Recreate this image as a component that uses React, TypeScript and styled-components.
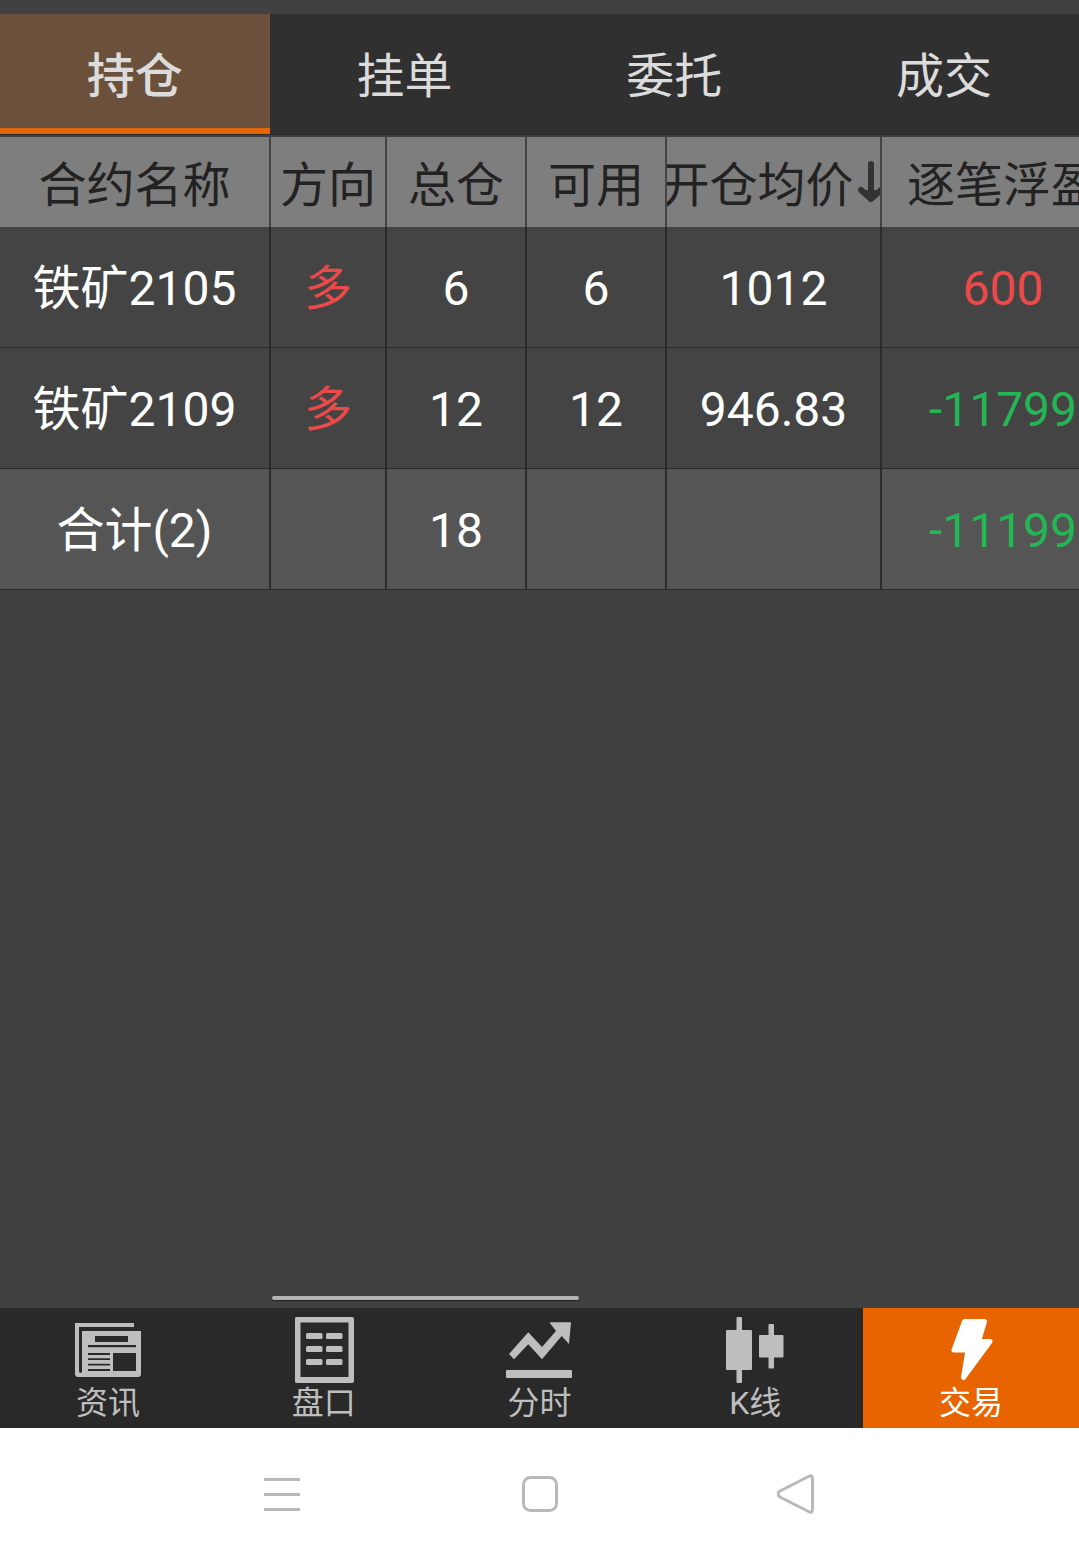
import React, { useState } from "react";
import styled, { createGlobalStyle } from "styled-components";

const GlobalStyle = createGlobalStyle`
  * { box-sizing: border-box; }
  body {
    margin: 0;
    background: #414141;
    font-family: Roboto, "Noto Sans CJK SC", sans-serif;
  }
  button { font: inherit; color: inherit; border: 0; padding: 0; background: none; cursor: pointer; }
`;

const Page = styled.div`
  display: flex;
  flex-direction: column;
  min-height: 100vh;
  padding-top: 14px;
  background: #414141;
`;

const TabBar = styled.div`
  display: grid;
  grid-template-columns: repeat(4, 1fr);
  height: 121px;
  background: #303030;
  border-bottom: 1px solid #292929;
`;

const Tab = styled.button<{ $active: boolean }>`
  && {
    padding-top: ${(p) => (p.$active ? 12 : 6)}px;
    font-size: 48px;
    line-height: 72px;
    font-weight: ${(p) => (p.$active ? 500 : 400)};
    color: #dcdcdc;
    background: ${(p) => (p.$active ? "#6b513b" : "transparent")};
    border-bottom: ${(p) => (p.$active ? "6px solid #e4660a" : "0")};
  }
`;

const TableScroller = styled.main`
  flex: 1;
  margin-top: 2px;
  overflow-x: auto;
  scrollbar-width: none;
`;

const Table = styled.table`
  table-layout: fixed;
  width: 1126px;
  min-width: 100%;
  border-collapse: separate;
  border-spacing: 0;
  font-size: 48px;
  line-height: 72px;
  text-align: center;
`;

const Col = styled.col<{ $width: number }>`
  width: ${(p) => p.$width}px;
`;

const HeadCell = styled.th`
  height: 90px;
  padding: 8px 0 0;
  font-weight: 400;
  color: #222222;
  background: #7e7e7e;
  border-right: 2px solid #444444;
  overflow: hidden;
  white-space: nowrap;
`;

const SortButton = styled.button`
  display: flex;
  align-items: center;
  justify-content: center;
  gap: 2px;
  width: 100%;
  white-space: nowrap;
`;

const SortIcon = styled.svg`
  flex: none;
  width: 30px;
  height: 42px;
  margin-bottom: 8px;
`;

const Row = styled.tr<{ $total?: boolean }>`
  background: ${(p) => (p.$total ? "#555555" : "#444444")};
`;

const Cell = styled.td<{ $tone?: Tone }>`
  height: 121px;
  padding: 4px 0 0;
  color: ${(p) => (p.$tone === "up" ? "#ea4a4a" : p.$tone === "down" ? "#24b554" : "#ffffff")};
  border-right: 2px solid #2b2b2b;
  border-bottom: 1px solid #2b2b2b;
  white-space: nowrap;
`;

const ScrollTrack = styled.div`
  padding: 0 0 8px 272px;
`;

const ScrollThumb = styled.div`
  width: 38%;
  height: 4px;
  border-radius: 2px;
  background: #b4b4b4;
  box-shadow: 0 1px 1px #222222;
`;

const BottomNav = styled.nav`
  display: grid;
  grid-template-columns: repeat(5, 1fr);
  height: 120px;
  background: #292929;
`;

const NavItem = styled.button<{ $active: boolean }>`
  && {
    display: flex;
    flex-direction: column;
    align-items: center;
    padding-top: 9px;
    font-size: 32px;
    line-height: 40px;
    color: ${(p) => (p.$active ? "#ffffff" : "#bebebe")};
    background: ${(p) => (p.$active ? "#e86400" : "transparent")};
  }
`;

const NavIcon = styled.svg`
  display: block;
  width: 66px;
  height: 66px;
  fill: currentColor;
`;

const SystemBar = styled.footer`
  display: flex;
  justify-content: center;
  height: 131px;
  background: #ffffff;
`;

const SystemButton = styled.button`
  display: flex;
  align-items: center;
  justify-content: center;
  width: 258px;
`;

const SystemIcon = styled.svg`
  width: 42px;
  height: 42px;
  fill: none;
  stroke: #b9b9b9;
  stroke-width: 3;
  stroke-linejoin: round;
`;

type Tone = "up" | "down";
type Value = { text: string; tone?: Tone };

const tabs = ["持仓", "挂单", "委托", "成交"];

const columns = [
  { title: "合约名称", width: 271 },
  { title: "方向", width: 116 },
  { title: "总仓", width: 140 },
  { title: "可用", width: 140 },
  { title: "开仓均价", width: 215, sorted: true },
  { title: "逐笔浮盈", width: 244 },
];

const rows: { total?: boolean; values: Value[] }[] = [
  {
    values: [
      { text: "铁矿2105" }, { text: "多", tone: "up" }, { text: "6" },
      { text: "6" }, { text: "1012" }, { text: "600", tone: "up" },
    ],
  },
  {
    values: [
      { text: "铁矿2109" }, { text: "多", tone: "up" }, { text: "12" },
      { text: "12" }, { text: "946.83" }, { text: "-11799", tone: "down" },
    ],
  },
  {
    total: true,
    values: [
      { text: "合计(2)" }, { text: "" }, { text: "18" },
      { text: "" }, { text: "" }, { text: "-11199", tone: "down" },
    ],
  },
];

const navItems = [
  {
    label: "资讯",
    icon: (
      <path
        fillRule="evenodd"
        d="M0 6H59V10H4V54Q4 56 5.500 56Q7 56 7 54V14H66V57Q66 60 63 60H3Q0 60 0 57ZM20 19V25H53V19ZM13 28V30.300H61V28ZM13 36V38H35V36ZM13 41.300V43H35V41.300ZM13 46.700V48.500H35V46.700ZM13 52V54H35V52ZM38 36V54H61V36Z"
      />
    ),
  },
  {
    label: "盘口",
    icon: (
      <>
        <path fillRule="evenodd" d="M5 0H61Q63 0 63 2V64Q63 66 61 66H5Q4 66 4 64V2Q4 0 5 0ZM9.500 5.500V60H57.500V5.500Z" />
        {[16, 29, 42].map((y) => (
          <React.Fragment key={y}>
            <rect x="15" y={y} width="16.500" height="6" rx="1.500" />
            <rect x="35" y={y} width="16.500" height="6" rx="1.500" />
          </React.Fragment>
        ))}
      </>
    ),
  },
  {
    label: "分时",
    icon: (
      <>
        <path d="M3 37L22.300 15.300L36 30L50 14L43.300 5.300H65L63 27L55.700 19L36 42.300L22.300 27.300L8 42.300Z" />
        <rect y="53" width="66" height="8" rx="1" />
      </>
    ),
  },
  {
    label: "K线",
    icon: (
      <>
        <rect x="14.500" width="5.500" height="66" rx="1" />
        <rect x="4" y="13" width="26" height="40" rx="1" />
        <rect x="46.500" y="7" width="5.500" height="44.500" rx="1" />
        <rect x="37" y="18" width="24.500" height="22.500" rx="1" />
      </>
    ),
  },
  {
    label: "交易",
    icon: (
      <path
        d="M26.500 4.500H46.500L40.500 24.500H52L25.500 60.500L30 33H16Z"
        stroke="currentColor"
        strokeWidth="5"
        strokeLinejoin="round"
      />
    ),
  },
];

export default function App() {
  const [tab, setTab] = useState(0);
  const [section, setSection] = useState(4);

  return (
    <>
      <GlobalStyle />
      <Page>
        <TabBar role="tablist">
          {tabs.map((name, i) => (
            <Tab key={name} role="tab" aria-selected={i === tab} $active={i === tab} onClick={() => setTab(i)}>
              {name}
            </Tab>
          ))}
        </TabBar>

        <TableScroller>
          <Table>
            <colgroup>
              {columns.map((c) => <Col key={c.title} $width={c.width} />)}
            </colgroup>
            <thead>
              <tr>
                {columns.map((c) => (
                  <HeadCell key={c.title} scope="col" aria-sort={c.sorted ? "descending" : undefined}>
                    {c.sorted ? (
                      <SortButton>
                        {c.title}
                        <SortIcon viewBox="0 0 30 42" fill="none" stroke="#333333" strokeWidth="6" strokeLinecap="round" strokeLinejoin="round" aria-hidden="true">
                          <path d="M15 3V37M5 29L15 38L25 29M10 32H20" />
                        </SortIcon>
                      </SortButton>
                    ) : c.title}
                  </HeadCell>
                ))}
              </tr>
            </thead>
            <tbody>
              {rows.map((row) => (
                <Row key={row.values[0].text} $total={row.total}>
                  {row.values.map((v, i) => <Cell key={i} $tone={v.tone}>{v.text}</Cell>)}
                </Row>
              ))}
            </tbody>
          </Table>
        </TableScroller>

        <ScrollTrack>
          <ScrollThumb />
        </ScrollTrack>

        <BottomNav>
          {navItems.map((item, i) => (
            <NavItem key={item.label} $active={i === section} onClick={() => setSection(i)}>
              <NavIcon viewBox="0 0 66 66" aria-hidden="true">{item.icon}</NavIcon>
              {item.label}
            </NavItem>
          ))}
        </BottomNav>

        <SystemBar>
          <SystemButton aria-label="菜单">
            <SystemIcon viewBox="0 0 42 42"><path d="M3 6.500H39M3 21.500H39M3 36.500H39" /></SystemIcon>
          </SystemButton>
          <SystemButton aria-label="主页">
            <SystemIcon viewBox="0 0 42 42"><rect x="4.500" y="4.500" width="33" height="33" rx="7" /></SystemIcon>
          </SystemButton>
          <SystemButton aria-label="返回">
            <SystemIcon viewBox="0 0 42 42">
              <path d="M31.500 3.500Q35.500 1 35.500 6V36Q35.500 41 31.500 38.500L3 24Q-1 21 3 18Z" />
            </SystemIcon>
          </SystemButton>
        </SystemBar>
      </Page>
    </>
  );
}
